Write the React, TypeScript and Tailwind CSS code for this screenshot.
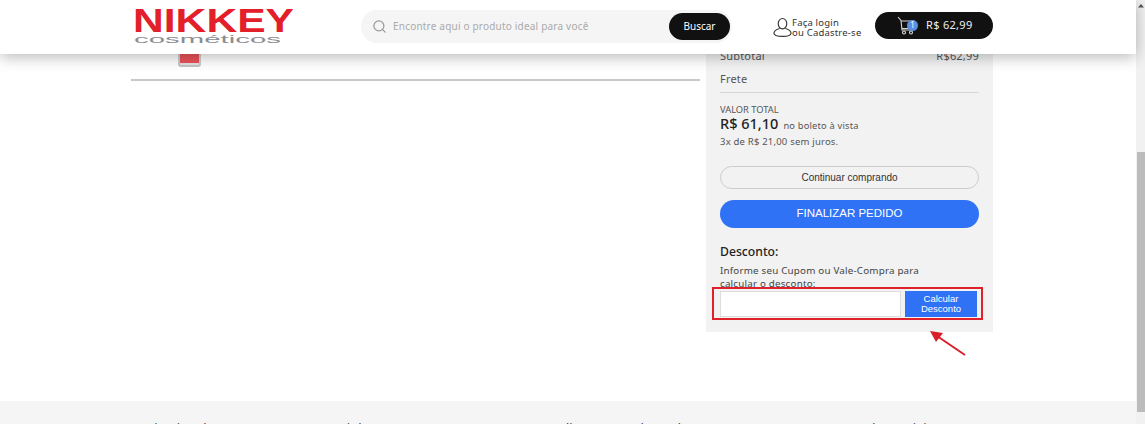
import { Search } from "lucide-react";

const sans = "font-['Noto_Sans',sans-serif]";
const arial = "font-['Liberation_Sans',Arial,sans-serif]";

function Logo() {
  return (
    <svg width="162" height="40" viewBox="0 0 162 40" className="shrink-0">
      <text x="-1" y="26" fill="#e3202a" fontFamily="Liberation Sans" fontWeight="700" fontSize="34" textLength="161" lengthAdjust="spacingAndGlyphs">NIKKEY</text>
      <text x="0" y="37" fill="#8a8c8f" fontFamily="Liberation Sans" fontSize="11.5" textLength="147" lengthAdjust="spacingAndGlyphs">cosméticos</text>
    </svg>
  );
}

function UserIcon() {
  return (
    <svg width="19" height="21" viewBox="0 0 20 21" fill="none" stroke="#333" strokeWidth="1.2" className="shrink-0">
      <ellipse cx="10" cy="6.5" rx="4.5" ry="5.5" />
      <path d="M7 11.5C3.5 12.5 1 14 1 16.5C1 18.8 3.5 19.8 10 19.8C16.5 19.8 19 18.8 19 16.5C19 14 16.5 12.5 13 11.5" />
    </svg>
  );
}

function CartIcon() {
  return (
    <svg width="19" height="20" viewBox="0 0 19 20" fill="none" stroke="#d8d8d8" strokeWidth="1.1" className="shrink-0">
      <path d="M1 1L4 4.5L5 14H16" />
      <path d="M4.2 5H17V12.5H5" />
      <circle cx="7" cy="16.5" r="1.5" />
      <circle cx="14" cy="16.5" r="1.5" />
    </svg>
  );
}

export default function App() {
  return (
    <div className={`flex h-[424px] w-full overflow-hidden bg-white text-[#333] ${sans}`}>
      <div className="flex min-w-0 flex-1 flex-col">
        <header className="relative z-10 flex h-[54px] shrink-0 items-start bg-white pl-[134px] shadow-[0_3px_14px_rgba(0,0,0,0.28)]">
          <div className="mt-[6px]"><Logo /></div>
          <div className="ml-[65px] mt-[10px] flex h-[33px] w-[371px] shrink-0 items-center rounded-full bg-[#f5f5f5] pl-[11px] pr-[2px]">
            <Search size={15} strokeWidth={2} className="shrink-0 text-[#9a9a9a]" />
            <span className="ml-[6px] flex-1 text-[10px] tracking-[0.2px] text-[#aaa]">Encontre aqui o produto ideal para você</span>
            <button className="h-[27px] w-[61px] rounded-full bg-[#111] text-[10px] text-white">Buscar</button>
          </div>
          <div className="ml-[41px] mt-[17px] flex w-[102px] shrink-0 items-start">
            <UserIcon />
            <span className="mt-[1px] text-[9.5px] leading-[10px] tracking-[0.2px] text-[#333]">Faça login<br />ou Cadastre-se</span>
          </div>
          <div className="mt-[12px] flex h-[27px] w-[118px] shrink-0 items-center rounded-full bg-[#111] pl-[22px] text-white">
            <div className="relative h-[20px] w-[19px]">
              <CartIcon />
              <span className="absolute left-[10px] top-[4px] flex h-[11px] w-[11px] items-center justify-center rounded-full bg-[#5b8fe0] text-[8px] leading-none">1</span>
            </div>
            <span className="ml-[10px] text-[11px] tracking-[0.3px] text-[#eee]">R$ 62,99</span>
          </div>
        </header>

        <main className="-mt-[6px] flex min-h-0 flex-1 overflow-hidden pl-[131px]">
          <section className="w-[569px] shrink-0">
            <div className="ml-[47px] h-[19px] w-[23px]">
              <div className="h-[15px] w-[23px] border-x-2 border-[#cfcfcf] bg-[#ea5358]" />
              <div className="h-[4px] w-[23px] rounded-b-[3px] border-x-2 border-b-2 border-[#c4c4c4] bg-[#e2e2e2]" />
            </div>
            <div className="mt-[12px] h-[2px] w-full bg-[#c8c8c8]" />
          </section>

          <aside className="ml-[6px] flex h-[284px] w-[287px] shrink-0 flex-col bg-[#f2f2f2] px-[14px]">
            <div className="mt-[1px] flex h-[14px] items-center justify-between text-[11px] tracking-[0.2px] text-[#555]">
              <span>Subtotal</span>
              <span>R$62,99</span>
            </div>
            <div className="mt-[9px] h-[14px] text-[11px] leading-[14px] tracking-[0.2px] text-[#555]">Frete</div>
            <div className="mt-[6px] h-[1px] w-full bg-[#d6d6d6]" />
            <div className="mt-[11px] text-[9.3px] leading-[12px] text-[#555]">VALOR TOTAL</div>
            <div className="-mt-[1px] flex h-[17px] items-baseline leading-[17px]">
              <span className="text-[14.5px] font-medium text-[#222]">R$ 61,10</span>
              <span className="ml-[5px] text-[9.3px] tracking-[0.2px] text-[#555]">no boleto à vista</span>
            </div>
            <div className="mt-[3px] text-[9.5px] leading-[14px] tracking-[0.2px] text-[#555]">3x de R$ 21,00 sem juros.</div>
            <button className={`mt-[17px] h-[23px] w-full shrink-0 rounded-full border border-[#ccc] text-[10px] text-[#333] ${arial}`}>Continuar comprando</button>
            <button className={`mt-[11px] h-[28px] w-full shrink-0 rounded-full bg-[#2f72f5] text-[11.5px] text-white ${arial}`}>FINALIZAR PEDIDO</button>
            <div className="mt-[16px] h-[16px] text-[12.2px] font-medium leading-[16px] text-[#222]">Desconto:</div>
            <div className="mt-[4px] h-[26px] text-[9.8px] leading-[13px] tracking-[0.2px] text-[#444]">Informe seu Cupom ou Vale-Compra para<br />calcular o desconto:</div>
            <div className="relative z-[1] -ml-[8px] -mr-[4px] -mt-[3px] flex h-[33px] shrink-0 items-center border-2 border-[#e0202a] bg-[#f2f2f2] pl-[6px]">
              <input className="h-[26px] w-[181px] border border-[#ddd] bg-white" aria-label="Cupom" />
              <button className={`ml-[4px] h-[26px] w-[72px] bg-[#2f72f5] text-[9.5px] leading-[10px] text-white ${arial}`}>Calcular<br />Desconto</button>
            </div>
          </aside>
        </main>

        <footer className={`flex h-[23px] shrink-0 overflow-hidden bg-[#f5f5f5] pl-[131px] pt-[18px] text-[13px] text-[#444] ${sans}`}>
          <span className="w-[204px]">Institucional</span>
          <span className="w-[198px]">Minha Conta</span>
          <span className="w-[319px]">Atendimento e Televendas</span>
          <span>Redes sociais</span>
        </footer>
      </div>

      <div className="flex w-[9px] shrink-0 flex-col bg-[#f1f1f1]">
        <svg width="9" height="8" viewBox="0 0 9 8" className="mt-[2px]"><path d="M5 2L8 5.5H2Z" fill="#555" /></svg>
        <div className="ml-[1px] mt-[142px] h-[260px] bg-[#bcbcbc]" />
      </div>

      <svg className="pointer-events-none absolute left-[925px] top-[326px]" width="45" height="34" viewBox="0 0 45 34" fill="none">
        <path d="M40 29L12 10" stroke="#d9202a" strokeWidth="2" />
        <path d="M5 5L18 7L11 16Z" fill="#d9202a" />
      </svg>
    </div>
  );
}
